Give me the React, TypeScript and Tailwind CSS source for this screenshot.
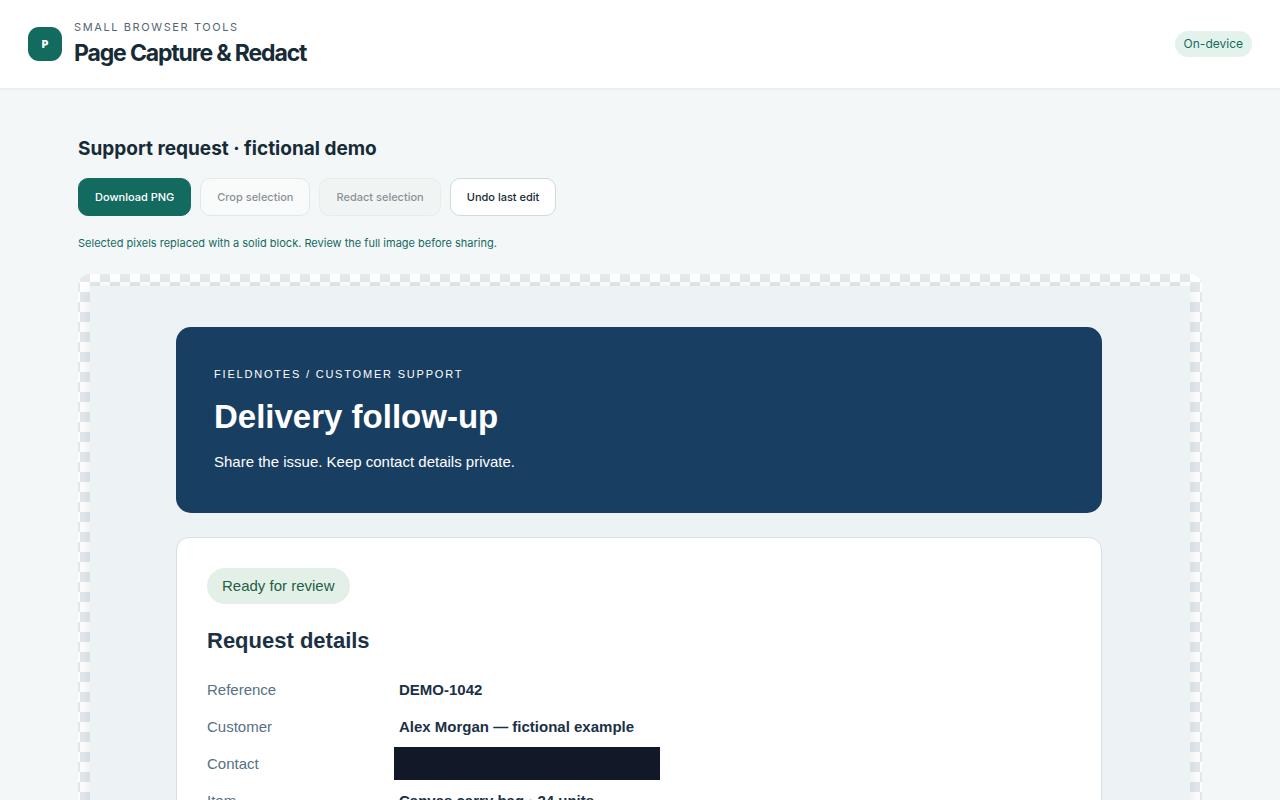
import React from "react";

const details = [
  { label: "Reference", value: "DEMO-1042" },
  { label: "Customer", value: "Alex Morgan — fictional example" },
  { label: "Contact", redacted: true },
  { label: "Item", value: "Canvas carry bag · 24 units" },
];

const buttonBase = "h-[38px] rounded-[10px] border px-4 text-[11px]";

function Header() {
  return (
    <header className="flex h-[90px] items-center justify-between border-b-2 border-[#e9eff1] bg-white px-7">
      <div className="flex items-center gap-3">
        <div className="flex size-[34px] items-center justify-center rounded-[11px] bg-[#136b5f] text-[10px] font-black text-white">
          P
        </div>
        <div className="pt-[2px]">
          <p className="text-[11px] leading-4 tracking-[1.6px] text-[#536672]">SMALL BROWSER TOOLS</p>
          <h1 className="text-[23px] leading-9 font-bold tracking-tighter text-[#172b37]">Page Capture &amp; Redact</h1>
        </div>
      </div>
      <span className="rounded-full bg-[#e4f2ec] px-[9px] text-[12px] leading-[26px] text-[#136b5f]">On-device</span>
    </header>
  );
}

function CapturedPage() {
  return (
    <div className="bg-[#edf3f5] px-[86px] pt-[41px] pb-10 font-['Liberation_Sans',Arial,sans-serif] text-[#1c3144] shadow-[0_3px_14px_rgba(23,43,55,0.12)]">
      <div className="mr-[2px] rounded-[15px] bg-[#183e62] px-[38px] pt-[38px] pb-[40px] text-white">
        <p className="text-[11px] leading-[18px] tracking-[1.8px]">FIELDNOTES / CUSTOMER SUPPORT</p>
        <h3 className="mt-2 text-[33px] leading-[52px] font-bold">Delivery follow-up</h3>
        <p className="mt-2 text-[15px] leading-[22px]">Share the issue. Keep contact details private.</p>
      </div>
      <section className="mt-6 mr-[2px] rounded-[13px] border border-[#d6e0e7] bg-white px-[30px] pt-[30px] pb-8">
        <span className="inline-block rounded-full bg-[#e3f0e8] px-[15px] text-[15px] leading-9 text-[#245f46]">
          Ready for review
        </span>
        <h4 className="mt-5 text-[22px] leading-[34px] font-bold">Request details</h4>
        <dl className="mt-[13px] grid grid-cols-[192px_1fr] text-[15px] leading-[37px]">
          {details.map((item) => (
            <React.Fragment key={item.label}>
              <dt className="text-[#587083]">{item.label}</dt>
              <dd className="font-bold">
                {item.redacted ? (
                  <div className="mt-[2px] -ml-[5px] h-[33px] w-[266px] bg-[#111827]" />
                ) : (
                  item.value
                )}
              </dd>
            </React.Fragment>
          ))}
        </dl>
      </section>
    </div>
  );
}

export default function App() {
  return (
    <div className="min-h-screen bg-[#f3f7f8] font-['Inter',sans-serif] text-[#172b37]">
      <Header />
      <main className="mx-auto max-w-[1180px] px-7 pt-11 pb-10">
        <h2 className="text-[19px] leading-[30px] font-bold">Support request · fictional demo</h2>
        <div className="mt-[14px] flex flex-wrap gap-[9px]">
          <button className={`${buttonBase} border-[#136b5f] bg-[#136b5f] font-medium text-white`}>Download PNG</button>
          <button disabled className={`${buttonBase} border-[#cbdcdf] bg-white font-medium opacity-50`}>
            Crop selection
          </button>
          <button disabled className={`${buttonBase} border-[#dce5e5] bg-[#eef2ef] font-medium opacity-50`}>
            Redact selection
          </button>
          <button className={`${buttonBase} border-[#cbdcdf] bg-white font-medium`}>Undo last edit</button>
        </div>
        <p className="mt-[18px] text-[11px] leading-[18px] text-[#136b5f]">
          Selected pixels replaced with a solid block. Review the full image before sharing.
        </p>
        <div className="mt-[22px] rounded-xl bg-[conic-gradient(#e4e9ec_25%,#ffffff_0_50%,#e4e9ec_0_75%,#ffffff_0)] bg-[length:20px_20px] bg-[position:2px_8px] p-3">
          <CapturedPage />
        </div>
      </main>
    </div>
  );
}
